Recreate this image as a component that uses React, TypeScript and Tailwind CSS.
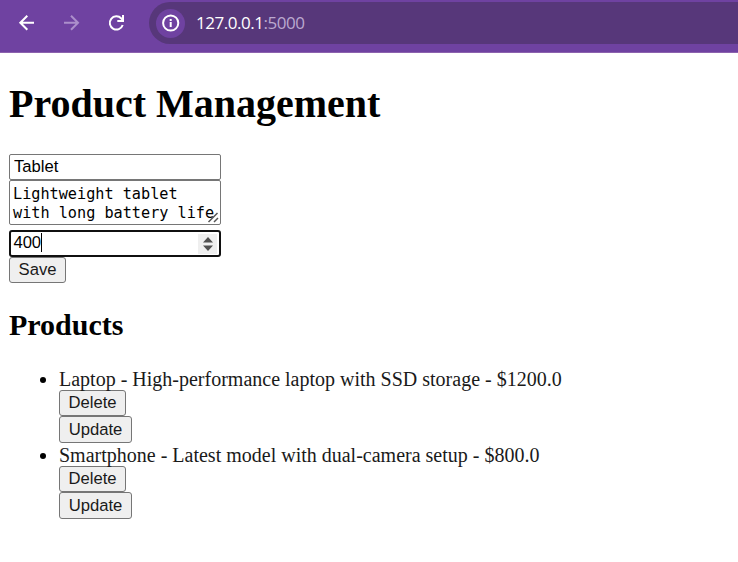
import React from "react";

const products = [
  { name: "Laptop", description: "High-performance laptop with SSD storage", price: "1200.0" },
  { name: "Smartphone", description: "Latest model with dual-camera setup", price: "800.0" },
];

function Button({ children, className }: { children: string; className: string }) {
  return (
    <button
      className={`block rounded-[3px] border border-[#767676] bg-[#efefef] text-center font-['Liberation_Sans',Arial,sans-serif] text-[16.67px] leading-[24px] text-[#1a1a1a] ${className}`}
    >
      {children}
    </button>
  );
}

function Toolbar() {
  return (
    <header className="flex h-[53px] items-start border-b border-[#8c62ae] bg-[#6f42a1]">
      <div className="flex h-[46px] w-[149px] shrink-0 items-center pl-[18px]">
        <svg width="18" height="18" viewBox="0 0 18 18" fill="none" stroke="#ffffff" strokeWidth="2">
          <path d="M16 8.700H2.500M9.300 1.700L2.300 8.700l7 7" />
        </svg>
        <svg className="ml-[27px]" width="18" height="18" viewBox="0 0 18 18" fill="none" stroke="#ac8fcb" strokeWidth="2">
          <path d="M1 8.700h13.500M8 1.700l7 7-7 7" />
        </svg>
        <svg className="ml-[27px]" width="18" height="18" viewBox="0 0 18 18" fill="none" stroke="#ffffff" strokeWidth="2">
          <path d="M14.700 11A6.600 6.600 0 1 1 13.300 4.500L14.500 6" />
          <path d="M16 1v7H9.300V6h4.700V1z" fill="#ffffff" stroke="none" />
        </svg>
      </div>
      <div className="mt-[2px] flex h-[42px] flex-1 items-center rounded-l-full bg-[#57377a] pl-[7px]">
        <div className="flex size-[29px] items-center justify-center rounded-full bg-[#6f42a1]">
          <svg width="18" height="18" viewBox="0 0 18 18" fill="none" stroke="#ffffff">
            <circle cx="8.700" cy="9" r="7.600" strokeWidth="2" />
            <path d="M8.700 8v5M8.700 5v2" strokeWidth="2" />
          </svg>
        </div>
        <div className="ml-[11px] font-['Open_Sans','Noto_Sans',sans-serif] text-[17px] leading-[24px] tracking-[-0.47px] text-white">
          127.0.0.1<span className="text-[#bba9cf]">:5000</span>
        </div>
      </div>
    </header>
  );
}

export default function App() {
  return (
    <div className="h-[562px] overflow-hidden bg-white font-['Liberation_Serif','Times_New_Roman',serif] text-xl leading-[25px] text-black">
      <Toolbar />
      <main className="pl-[9px]">
        <h1 className="pt-[28px] text-[40px] leading-[46px] font-bold">Product Management</h1>
        <form className="mt-[27px] flex w-[212px] flex-col" onSubmit={(e) => e.preventDefault()}>
          <input
            type="text"
            defaultValue="Tablet"
            className="h-[26px] rounded-[2px] border border-[#767676] px-[4px] font-['Liberation_Sans',Arial,sans-serif] text-[16.67px] leading-[19px] outline-none"
          />
          <div className="grid h-[45px]">
            <textarea
              defaultValue="Lightweight tablet with long battery life"
              className="col-start-1 row-start-1 h-[45px] resize-none overflow-hidden rounded-[2px] border border-[#767676] pt-[4px] pl-[3px] font-['DejaVu_Sans_Mono',monospace] text-[15.2px] leading-[19px] outline-none"
            />
            <svg className="col-start-1 row-start-1 mr-[2px] mb-[2px] self-end justify-self-end" width="12" height="11" viewBox="0 0 12 11" stroke="#555555" strokeWidth="1.5">
              <path d="M1.500 10L10.500 1M7 10L11 6" />
            </svg>
          </div>
          <div className="mt-[5px] flex h-[27px] items-center rounded-[3px] border-2 border-[#101010] pl-[3px] font-['Liberation_Sans',Arial,sans-serif] text-[16.67px] leading-[19px]">
            <span className="-ml-[0.5px] pb-[2px] tracking-[-0.1px]">400</span>
            <span className="mb-[2px] h-[19px] w-px bg-black" />
            <span className="mr-[2px] ml-auto flex h-[20px] w-[19px] items-center justify-center bg-[#efefef]">
              <svg width="10" height="14" viewBox="0 0 10 14" fill="#505050">
                <path d="M0 5.500L5 0l5 5.500zM0 8.500h10L5 14z" />
              </svg>
            </span>
          </div>
          <Button className="h-[26px] w-[57px]">Save</Button>
        </form>
        <h2 className="mt-[25px] text-[30px] leading-[34px] font-bold">Products</h2>
        <ul className="mt-[25px] list-disc pl-[50px]">
          {products.map((p) => (
            <li key={p.name} className="h-[76px] text-[#1a1a1a] marker:text-black">
              {p.name} - {p.description} - ${p.price}
              <Button className="-mt-[2px] h-[26px] w-[67px]">Delete</Button>
              <Button className="h-[27px] w-[73px]">Update</Button>
            </li>
          ))}
        </ul>
      </main>
    </div>
  );
}
